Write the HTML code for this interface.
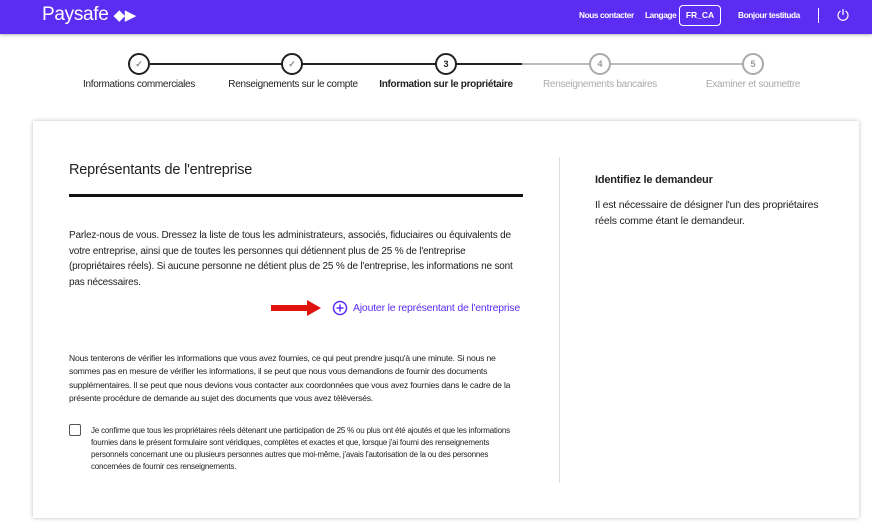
<!DOCTYPE html>
<html><head><meta charset="utf-8"><style>
*{margin:0;padding:0;box-sizing:border-box}
body{width:872px;height:525px;background:#fff;font-family:"Liberation Sans",sans-serif;color:#222;position:relative;overflow:hidden}
.hdr{position:absolute;left:0;top:0;width:872px;height:34px;background:#5b2cf2;box-shadow:0 1px 3px rgba(0,0,0,.3)}
.logo{position:absolute;left:42px;top:4px;color:#fff;font-size:19px;letter-spacing:-.3px}
.hdr .t{position:absolute;top:10px;color:#fff;font-size:8.3px;font-weight:bold;letter-spacing:-.4px}
.fr{position:absolute;left:679px;top:5px;width:42px;height:21px;border:1px solid #fff;border-radius:4px;color:#fff;font-size:8.5px;font-weight:bold;text-align:center;line-height:19px}
.step{position:absolute;top:53px;width:22px;height:22px;border-radius:50%;border:2px solid #222;background:#fff;font-size:9px;font-weight:bold;text-align:center;line-height:18px}
.step.g{border-color:#aaa;color:#999}
.line{position:absolute;top:63px;height:2px}
.lbl{position:absolute;top:79px;font-size:10px;letter-spacing:-.3px;transform:translateX(-50%);white-space:nowrap}
.card{position:absolute;left:33px;top:121px;width:826px;height:397px;background:#fff;box-shadow:0 0 4px rgba(0,0,0,.25)}
p{letter-spacing:-.2px}
</style></head><body>
<div class="hdr">
<div class="logo">Paysafe <span style="font-size:15px">◆▶</span></div>
<div class="t" style="left:579px">Nous contacter</div>
<div class="t" style="left:645px">Langage</div>
<div class="fr">FR_CA</div>
<div class="t" style="left:738px">Bonjour testituda</div>
<div style="position:absolute;left:818px;top:8px;width:1px;height:15px;background:#fff"></div>
<svg style="position:absolute;left:836px;top:8px" width="14" height="14" viewBox="0 0 14 14" fill="none" stroke="#fff" stroke-width="1.2"><path d="M4.5 3A5 5 0 1 0 9.5 3"/><path d="M7 1v6"/></svg>
</div>
<div class="line" style="left:150px;width:372px;background:#222"></div>
<div class="line" style="left:522px;width:230px;background:#bbb"></div>
<div class="step" style="left:128px;color:#888">✓</div>
<div class="step" style="left:281px;color:#888">✓</div>
<div class="step" style="left:435px">3</div>
<div class="step g" style="left:589px">4</div>
<div class="step g" style="left:742px">5</div>
<div class="lbl" style="left:139px">Informations commerciales</div>
<div class="lbl" style="left:293px">Renseignements sur le compte</div>
<div class="lbl" style="left:446px;font-weight:600">Information sur le propriétaire</div>
<div class="lbl" style="left:600px;color:#aaa">Renseignements bancaires</div>
<div class="lbl" style="left:753px;color:#aaa">Examiner et soumettre</div>
<div class="card">
<div style="position:absolute;left:36px;top:41px;font-size:14.5px;letter-spacing:-.2px">Représentants de l'entreprise</div>
<div style="position:absolute;left:36px;top:73px;width:454px;height:3px;background:#111"></div>
<p style="position:absolute;left:36px;top:107px;width:452px;font-size:10px;line-height:15.5px">Parlez-nous de vous. Dressez la liste de tous les administrateurs, associés, fiduciaires ou équivalents de votre entreprise, ainsi que de toutes les personnes qui détiennent plus de 25 % de l'entreprise (propriétaires réels). Si aucune personne ne détient plus de 25 % de l'entreprise, les informations ne sont pas nécessaires.</p>
<svg style="position:absolute;left:238px;top:178px" width="52" height="18"><path d="M0 6h36V1l14 8-14 8v-5H0z" fill="#e0130f"/></svg>
<svg style="position:absolute;left:299px;top:179px" width="16" height="16" fill="none" stroke="#5b2cf2" stroke-width="1.5"><circle cx="8" cy="8" r="6.5"/><path d="M8 4.5v7M4.5 8h7"/></svg>
<div style="position:absolute;left:320px;top:181px;font-size:10.5px;color:#5b2cf2;letter-spacing:-.2px">Ajouter le représentant de l'entreprise</div>
<p style="position:absolute;left:36px;top:231px;width:452px;font-size:8.6px;line-height:13.3px">Nous tenterons de vérifier les informations que vous avez fournies, ce qui peut prendre jusqu'à une minute. Si nous ne sommes pas en mesure de vérifier les informations, il se peut que nous vous demandions de fournir des documents supplémentaires. Il se peut que nous devions vous contacter aux coordonnées que vous avez fournies dans le cadre de la présente procédure de demande au sujet des documents que vous avez téléversés.</p>
<div style="position:absolute;left:36px;top:303px;width:12px;height:12px;border:1px solid #555;border-radius:2px"></div>
<p style="position:absolute;left:58px;top:304px;width:434px;font-size:8px;line-height:12px">Je confirme que tous les propriétaires réels détenant une participation de 25 % ou plus ont été ajoutés et que les informations fournies dans le présent formulaire sont véridiques, complètes et exactes et que, lorsque j'ai fourni des renseignements personnels concernant une ou plusieurs personnes autres que moi-même, j'avais l'autorisation de la ou des personnes concernées de fournir ces renseignements.</p>
<div style="position:absolute;left:526px;top:36px;width:1px;height:326px;background:#ddd"></div>
<div style="position:absolute;left:562px;top:53px;font-size:11px;font-weight:bold;letter-spacing:-.2px">Identifiez le demandeur</div>
<p style="position:absolute;left:562px;top:76px;width:240px;font-size:10.5px;line-height:16px">Il est nécessaire de désigner l'un des propriétaires réels comme étant le demandeur.</p>
</div>
</body></html>
